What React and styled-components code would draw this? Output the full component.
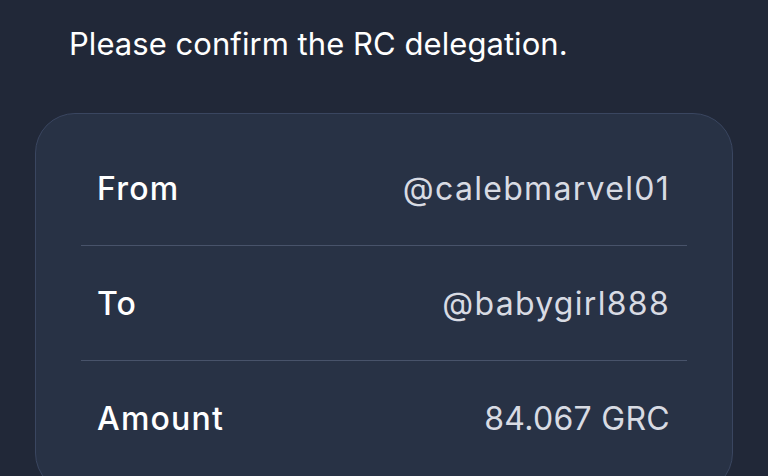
import styled, { createGlobalStyle } from "styled-components";

const GlobalStyle = createGlobalStyle`
    html, body {
        margin: 0;
        padding: 0;
        background: #212838;
        height: 100%;
        overflow: hidden;
    }
`

const rows = [
    { label: 'From', value: '@calebmarvel01' },
    { label: 'To', value: '@babygirl888' },
    { label: 'Amount', value: '84.067 GRC', numeric: true },
]

function App(){
    return (
        <>
            <GlobalStyle />
            <Page>
                <Title>Please confirm the RC delegation.</Title>
                <Card>
                    {rows.map((row, i) => (
                        <Row key={row.label} last={i === rows.length - 1}>
                            <Label>{row.label}</Label>
                            <Value numeric={row.numeric}>{row.value}</Value>
                        </Row>
                    ))}
                </Card>
            </Page>
        </>
    )
}

export default App;


const Page = styled.div`
    box-sizing: border-box;
    width: 768px;
    height: 476px;
    padding: 0 35px;
    display: flex;
    flex-direction: column;
    background: #212838;
`
const Title = styled.h1`
    margin: 25px 0 0 34px;
    font-family: Inter, 'Noto Sans', sans-serif;
    font-weight: 400;
    font-size: 31px;
    line-height: 38px;
    color: #ffffff;
    letter-spacing: 0.05px;
`
const Card = styled.div`
    margin-top: 50px;
    box-sizing: border-box;
    padding: 17px 45px;
    background: #283245;
    border: 1px solid #3a4660;
    border-radius: 40px;
    flex-shrink: 0;
`
const Row = styled.div`
    display: flex;
    align-items: center;
    justify-content: space-between;
    height: 114px;
    padding: 0 17px 0 16px;
    border-bottom: ${props => props.last ? 'none' : '1px solid #48536a'};
`
const Label = styled.span`
    font-family: Inter, 'Noto Sans', sans-serif;
    font-weight: 500;
    font-size: 32px;
    letter-spacing: 1.2px;
    color: #ffffff;
`
const Value = styled.span`
    font-family: Inter, 'Noto Sans', sans-serif;
    font-weight: 400;
    font-size: 32px;
    letter-spacing: ${props => props.numeric ? '0.3px' : '1.3px'};
    color: #d8dbe3;
`
